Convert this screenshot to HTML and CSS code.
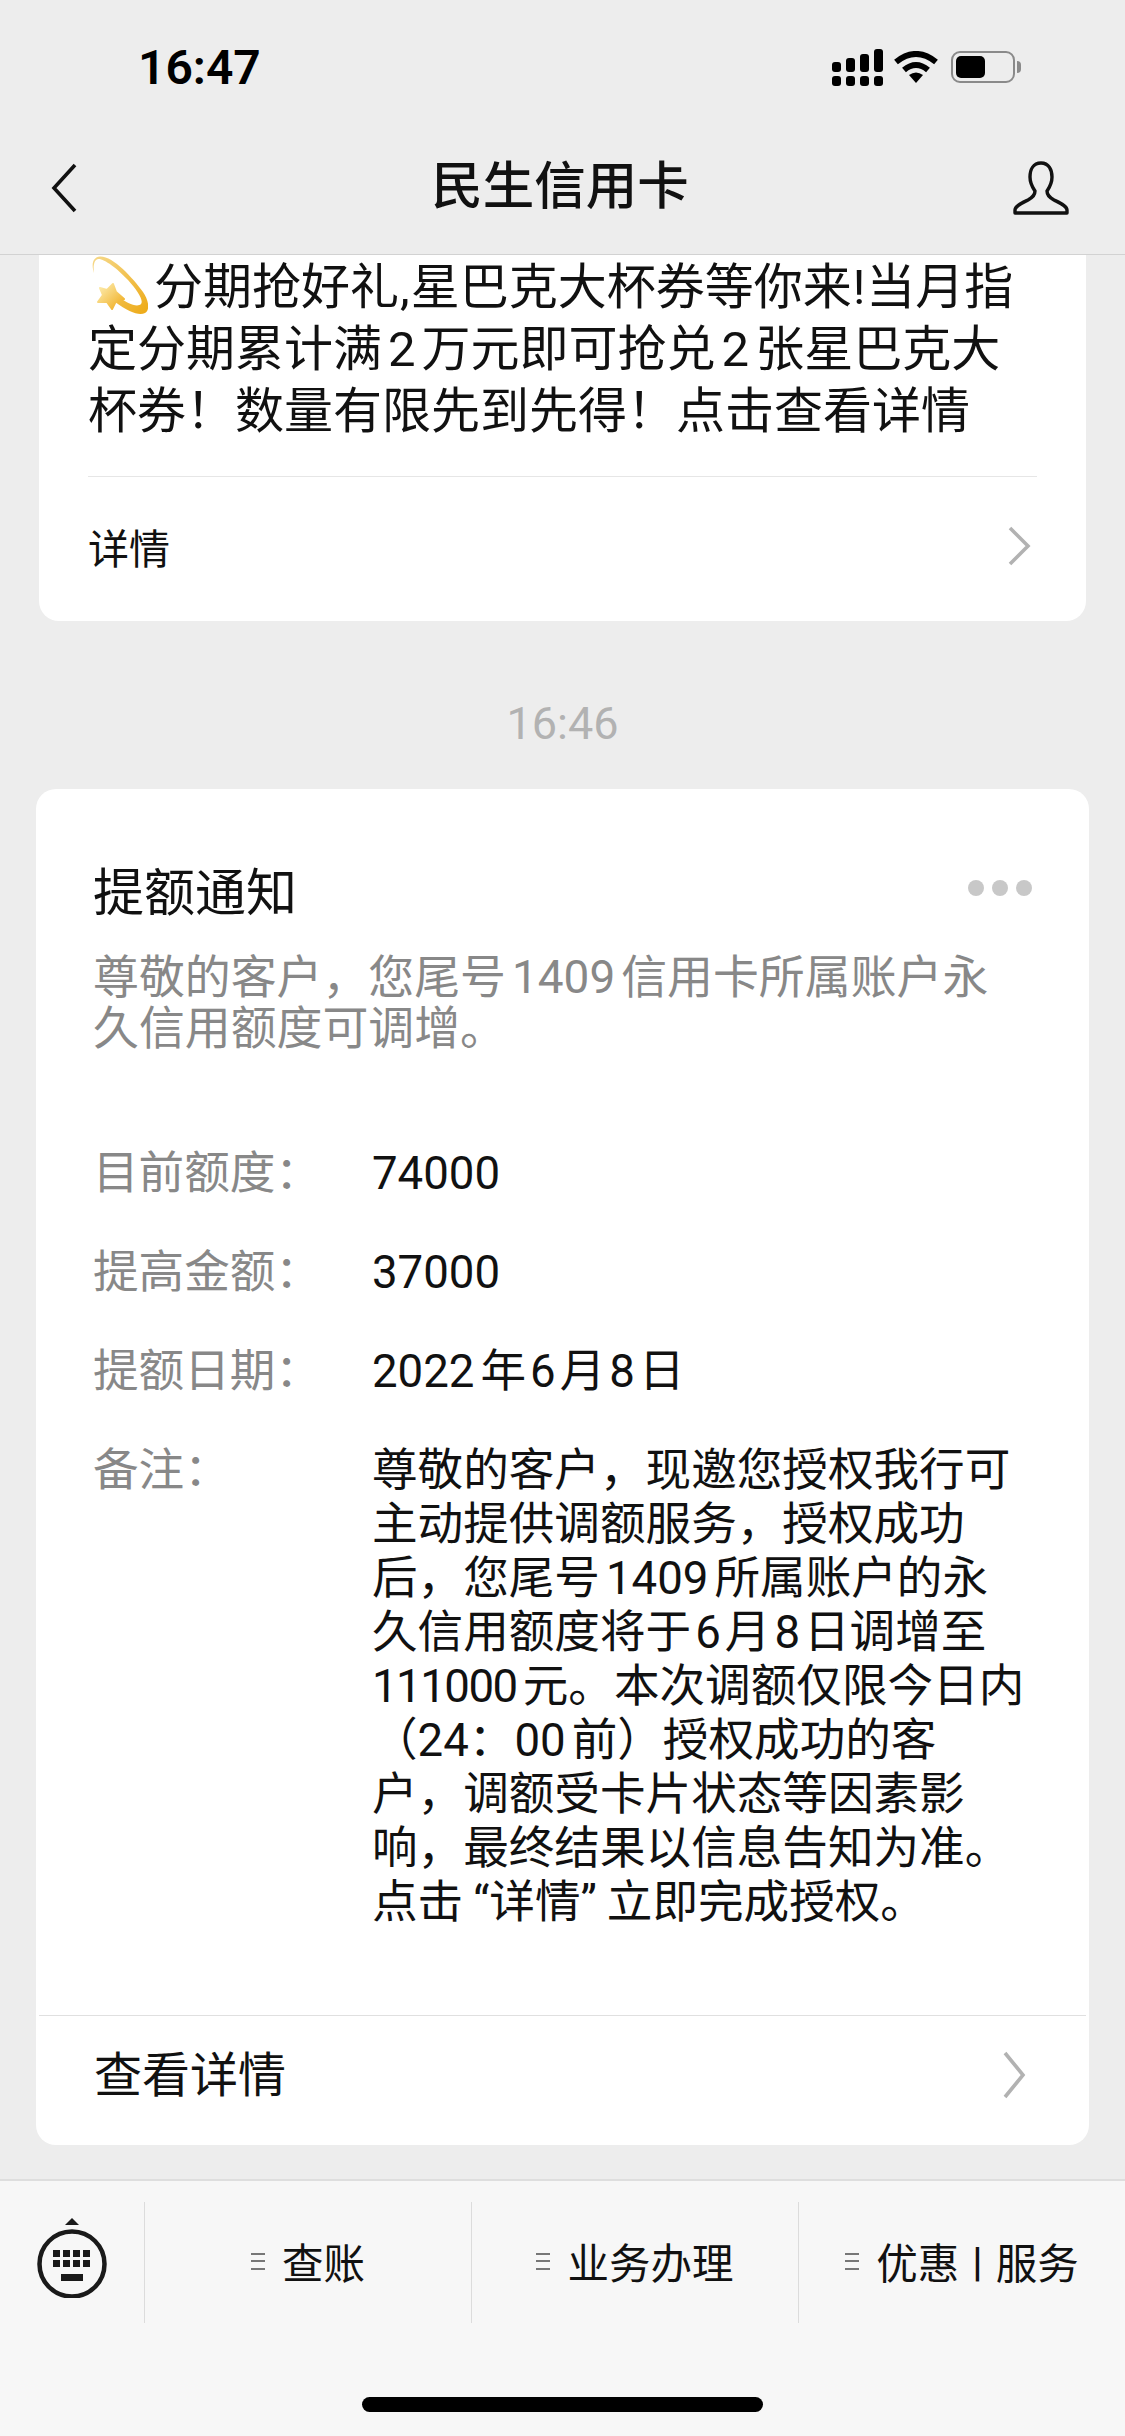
FILE: index.html
```html
<!DOCTYPE html>
<html lang="zh-CN">
<head>
    <meta charset="UTF-8">
    <meta name="viewport" content="width=device-width, initial-scale=1.0">
    <title>民生信用卡</title>
    <link rel="stylesheet" href="styles.css">
</head>
<body>

    <header class="top-bar">
        <div class="status-bar">
            <span class="clock">16:47</span>
            <div class="status-icons">
                <svg class="signal" viewBox="0 0 51 37" width="51" height="37">
                    <rect x="0" y="13" width="9" height="10" rx="3"/>
                    <rect x="14" y="9" width="9" height="14" rx="3"/>
                    <rect x="28" y="5" width="9" height="18" rx="3"/>
                    <rect x="42" y="0" width="9" height="23" rx="3"/>
                    <rect x="0" y="27" width="9" height="10" rx="3"/>
                    <rect x="14" y="27" width="9" height="10" rx="3"/>
                    <rect x="28" y="27" width="9" height="10" rx="3"/>
                    <rect x="42" y="27" width="9" height="10" rx="3"/>
                </svg>
                <svg class="wifi" viewBox="0 0 44 32" width="44" height="32">
                    <path d="M2 11 Q22 -5 42 11" fill="none" stroke="#000" stroke-width="6"/>
                    <path d="M10 19 Q22 9 34 19" fill="none" stroke="#000" stroke-width="6"/>
                    <path d="M22 32 L15 24 Q22 19 29 24 Z"/>
                </svg>
                <div class="battery"><div class="battery-level"></div></div>
                <div class="battery-tip"></div>
            </div>
        </div>
        <nav class="nav-bar">
            <svg class="back" viewBox="0 0 26 50" width="26" height="50">
                <path d="M24 2 L3 25 L24 48" fill="none" stroke="#111" stroke-width="3.6"/>
            </svg>
            <h1>民生信用卡</h1>
            <svg class="person" viewBox="0 0 56 54" width="56" height="54">
                <path d="M28 2 C20 2 17 9 17 16 C17 23 20 27 22 30 C22 34 20 36 15 39 C9 42 2 45 2 49 L2 52 L54 52 L54 49 C54 45 47 42 41 39 C36 36 34 34 34 30 C36 27 39 23 39 16 C39 9 36 2 28 2 Z" fill="none" stroke="#111" stroke-width="3.4" stroke-linejoin="round"/>
            </svg>
        </nav>
    </header>

    <main class="messages">
        <section class="card promo">
            <p class="promo-text">
                <svg class="dizzy" viewBox="0 0 57 59" width="57" height="59">
                    <defs>
                        <linearGradient id="ring" x1="0" y1="0" x2="1" y2="1">
                            <stop offset="0" stop-color="#f6d98a"/>
                            <stop offset="1" stop-color="#eda915"/>
                        </linearGradient>
                        <linearGradient id="star" x1="0" y1="0" x2="1" y2="1">
                            <stop offset="0" stop-color="#fdf0b8"/>
                            <stop offset="1" stop-color="#efa916"/>
                        </linearGradient>
                    </defs>
                    <path fill="url(#ring)" d="M3 17 C0 8 2 1 9 .5 C22 0 42 22 52 36 C58 45 59 54 54 57 C48 60 38 56 24 46 L28 41 C36 47 46 52 50 48 C53 44 46 34 37 24 C26 12 12 2 7 3 C3 4 2 10 3 17 Z"/>
                    <polygon fill="url(#star)" stroke="url(#star)" stroke-width="2" stroke-linejoin="round" points="22,28 25,36 33,43 25,45 21,53 16,46 7,46 12,39 9,32 16,34"/>
                </svg>分期抢好礼<span class="punct">,</span>星巴克大杯券等你来<span class="punct">!</span>当月指<br>定分期累计满<span class="num">2</span>万元即可抢兑<span class="num">2</span>张星巴克大<br>杯券！数量有限先到先得！点击查看详情
            </p>
            <div class="promo-link">
                <span>详情</span>
                <svg class="chevron" viewBox="0 0 24 40" width="24" height="40">
                    <path d="M3 2 L21 20 L3 38" fill="none" stroke="#b2b2b2" stroke-width="3.6"/>
                </svg>
            </div>
        </section>

        <div class="time-label">16:46</div>

        <section class="card notice">
            <div class="notice-head">
                <h2>提额通知</h2>
                <div class="dots"><i></i><i></i><i></i></div>
            </div>
            <p class="notice-sub">尊敬的客户，您尾号<span class="num">1409</span>信用卡所属账户永<br>久信用额度可调增。</p>

            <dl class="fields">
                <dt>目前额度：</dt>
                <dd>74000</dd>
                <dt>提高金额：</dt>
                <dd>37000</dd>
                <dt>提额日期：</dt>
                <dd><span class="num-end">2022</span>年<span class="num-sm">6</span>月<span class="num-sm">8</span>日</dd>
                <dt>备注：</dt>
                <dd>尊敬的客户，现邀您授权我行可<br>主动提供调额服务，授权成功<br>后，您尾号<span class="num">1409</span>所属账户的永<br>久信用额度将于<span class="num-sm">6</span>月<span class="num-sm">8</span>日调增至<br><span class="num-end tight">111000</span>元。本次调额仅限今日内<br>（24：<span class="num-end">00</span>前）授权成功的客<br>户，调额受卡片状态等因素影<br>响，最终结果以信息告知为准。<br>点击<span class="quote">“详情”</span>立即完成授权。</dd>
            </dl>

            <div class="notice-link">
                <span>查看详情</span>
                <svg class="chevron" viewBox="0 0 24 48" width="24" height="48">
                    <path d="M3 2 L21 24 L3 46" fill="none" stroke="#b2b2b2" stroke-width="3.6"/>
                </svg>
            </div>
        </section>
    </main>

    <footer class="menu-bar">
        <div class="menu-row">
            <div class="menu-key">
                <svg viewBox="0 0 72 80" width="72" height="80">
                    <polygon points="36,0 43,7 29,7" fill="#1a1a1a"/>
                    <circle cx="36" cy="46" r="32.5" fill="none" stroke="#1a1a1a" stroke-width="4.5"/>
                    <g fill="#1a1a1a">
                        <rect x="17" y="32" width="7" height="7"/>
                        <rect x="27" y="32" width="7" height="7"/>
                        <rect x="37" y="32" width="7" height="7"/>
                        <rect x="47" y="32" width="7" height="7"/>
                        <rect x="17" y="42" width="7" height="7"/>
                        <rect x="27" y="42" width="7" height="7"/>
                        <rect x="37" y="42" width="7" height="7"/>
                        <rect x="47" y="42" width="7" height="7"/>
                        <rect x="25" y="56" width="22" height="7"/>
                    </g>
                </svg>
            </div>
            <div class="menu-item"><span class="menu-lines"></span>查账</div>
            <div class="menu-item"><span class="menu-lines"></span>业务办理</div>
            <div class="menu-item"><span class="menu-lines"></span>优惠<span class="menu-sep">|</span>服务</div>
        </div>
        <div class="home-indicator"></div>
    </footer>

</body>
</html>
```

FILE: styles.css
```css
* {
    box-sizing: border-box;
}

html, body {
    margin: 0;
    padding: 0;
}

body {
    width: 1125px;
    height: 2436px;
    display: flex;
    flex-direction: column;
    overflow: hidden;
    background: #ededed;
    color: #111;
    font-family: Roboto, "Noto Sans CJK SC", sans-serif;
}

h1, h2, p, dl, dd {
    margin: 0;
    font-weight: 400;
}

/* top */
.top-bar {
    height: 255px;
    flex-shrink: 0;
    background: #ededed;
    border-bottom: 1px solid #d2d2d2;
}

.status-bar {
    height: 134px;
    display: flex;
    align-items: center;
    justify-content: space-between;
    padding: 0 104px 0 138px;
}

.clock {
    font-size: 48px;
    font-weight: 600;
    color: #000;
}

.status-icons {
    display: flex;
    align-items: center;
}

.signal {
    margin-right: 11px;
}

.wifi {
    margin-right: 13px;
}

.battery {
    width: 64px;
    height: 32px;
    padding: 3px;
    border: 2px solid #8a8a8a;
    border-radius: 9px;
}

.battery-level {
    width: 29px;
    height: 100%;
    background: #000;
    border-radius: 5px;
}

.battery-tip {
    width: 4px;
    height: 12px;
    margin-left: 2px;
    background: #8a8a8a;
    border-radius: 0 4px 4px 0;
}

.nav-bar {
    height: 120px;
    display: grid;
    grid-template-columns: 1fr auto 1fr;
    align-items: center;
    padding: 0 56px 12px 51px;
}

.nav-bar h1 {
    font-size: 51.5px;
    font-weight: 500;
    line-height: 70px;
    margin-bottom: 2px;
}

.person {
    justify-self: end;
}

/* messages */
.messages {
    flex: 1;
    overflow: hidden;
}

.card {
    background: #fff;
}

.promo {
    margin: 0 39px;
    padding: 0 49px;
    height: 366px;
    border-radius: 0 0 20px 20px;
}

.promo-text {
    font-size: 49px;
    line-height: 62px;
    padding-top: 2px;
    white-space: nowrap;
    height: 222px;
    border-bottom: 1px solid #e6e6e6;
}

.dizzy {
    display: inline-block;
    vertical-align: top;
    margin: -1px 6px 0 3px;
}

.punct {
    margin: 0 1px;
}

.num {
    margin: 0 6px;
}

.num-sm {
    margin: 0 4px;
}

.num-end {
    margin-right: 6px;
}

.tight {
    letter-spacing: -1.5px;
}

.quote {
    padding: 0 10px;
}

.promo-link {
    height: 144px;
    display: flex;
    align-items: center;
    justify-content: space-between;
    padding: 0 6px 6px 0;
    font-size: 41px;
}

.time-label {
    height: 168px;
    padding-top: 36px;
    display: flex;
    align-items: center;
    justify-content: center;
    font-size: 45px;
    color: #b2b2b2;
}

.notice {
    margin: 0 36px;
    height: 1356px;
    padding-top: 70px;
    border-radius: 20px;
}

.notice-head {
    display: flex;
    align-items: center;
    justify-content: space-between;
    height: 60px;
    padding: 0 57px;
}

.notice-head h2 {
    font-size: 51px;
}

.dots {
    display: flex;
    gap: 8px;
    margin-bottom: 2px;
}

.dots i {
    width: 16px;
    height: 16px;
    border-radius: 50%;
    background: #c8c8c8;
}

.notice-sub {
    margin-top: 33px;
    padding: 0 57px;
    font-size: 45.9px;
    line-height: 51px;
    color: #888;
    white-space: nowrap;
}

.fields {
    margin: 93px 0 85px;
    padding: 0 57px;
    display: grid;
    grid-template-columns: 279px 1fr;
    row-gap: 45px;
    font-size: 45.6px;
    line-height: 54px;
}

.fields dt {
    color: #888;
}

.fields dd {
    white-space: nowrap;
}

.notice-link {
    margin: 0 3px;
    height: 130px;
    display: flex;
    align-items: center;
    justify-content: space-between;
    padding: 0 60px 20px 55px;
    border-top: 1px solid #e0e0e0;
    font-size: 48px;
}

.notice-link .chevron {
    margin-top: 8px;
}

/* bottom */
.menu-bar {
    height: 257px;
    flex-shrink: 0;
    background: #f7f7f7;
    border-top: 2px solid #dedede;
}

.menu-row {
    margin-top: 21px;
    height: 121px;
    display: flex;
}

.menu-key {
    width: 144px;
    display: flex;
    align-items: center;
    justify-content: center;
    padding-bottom: 10px;
}

.menu-item {
    width: 327px;
    display: flex;
    align-items: center;
    justify-content: center;
    padding-bottom: 3px;
    border-left: 1px solid #dcdcdc;
    font-size: 41.5px;
}

.menu-lines {
    width: 14px;
    height: 17px;
    margin-right: 17px;
    border-top: 2px solid #777;
    border-bottom: 2px solid #777;
    background: linear-gradient(#777, #777) center / 100% 2px no-repeat;
}

.menu-sep {
    margin: 0 13px;
    font-weight: 500;
}

.home-indicator {
    width: 401px;
    height: 15px;
    margin: 74px auto 0;
    background: #000;
    border-radius: 8px;
}
```
